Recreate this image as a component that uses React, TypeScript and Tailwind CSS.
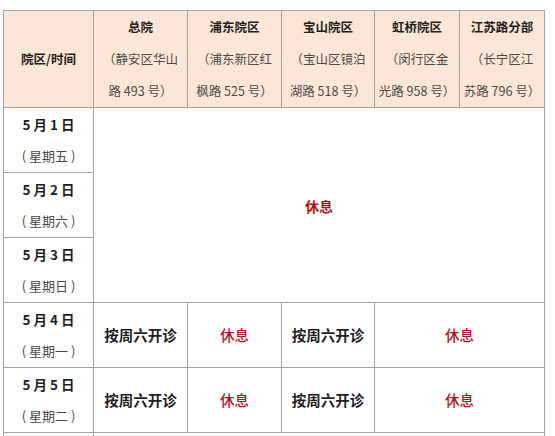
import React from "react";

const font = { fontFamily: '"Noto Sans CJK SC", "Noto Sans", sans-serif' };

const headers = [
  { name: "总院", l1: "（静安区华山", l2: "路 493 号）" },
  { name: "浦东院区", l1: "（浦东新区红", l2: "枫路 525 号）" },
  { name: "宝山院区", l1: "（宝山区镜泊", l2: "湖路 518 号）" },
  { name: "虹桥院区", l1: "（闵行区金", l2: "光路 958 号）" },
  { name: "江苏路分部", l1: "（长宁区江", l2: "苏路 796 号）" },
];

const td = "border border-[#a3a3a3] p-0 text-center align-middle";

function DateCell({ d, w }: { d: string; w: string }) {
  return (
    <td className={`${td} h-[65px]`}>
      <div className="leading-[32px] text-[13.5px] font-bold text-[#1f1f1f]">{d}</div>
      <div className="leading-[32px] text-[13px] text-[#4a4a4a]">( {w} )</div>
    </td>
  );
}

export default function App() {
  return (
    <div className="h-[436px] w-[555px] overflow-hidden bg-white" style={font}>
      <div className="pl-[3px] pt-[10px]">
        <table className="table-fixed border-collapse w-[541px]">
          <colgroup>
            <col className="w-[90px]" />
            <col className="w-[94px]" />
            <col className="w-[94px]" />
            <col className="w-[93px]" />
            <col className="w-[85px]" />
            <col className="w-[85px]" />
          </colgroup>
          <thead>
            <tr className="bg-[#fce6d8]">
              <th className={`${td} h-[97px] text-[12.5px] font-bold text-[#1f1f1f]`}>院区/时间</th>
              {headers.map((h) => (
                <th key={h.name} className={`${td} h-[97px] text-[12.5px] font-normal`}>
                  <div className="leading-[32px] font-bold text-[#1f1f1f] whitespace-nowrap">{h.name}</div>
                  <div className="leading-[32px] text-[#4a4a4a] whitespace-nowrap">{h.l1}</div>
                  <div className="leading-[32px] text-[#4a4a4a] whitespace-nowrap">{h.l2}</div>
                </th>
              ))}
            </tr>
          </thead>
          <tbody>
            <tr>
              <DateCell d="5 月 1 日" w="星期五" />
              <td className={td} colSpan={5} rowSpan={3}>
                <span className="text-[14px] font-bold text-[#b3121b]">休息</span>
              </td>
            </tr>
            <tr>
              <DateCell d="5 月 2 日" w="星期六" />
            </tr>
            <tr>
              <DateCell d="5 月 3 日" w="星期日" />
            </tr>
            {[
              ["5 月 4 日", "星期一"],
              ["5 月 5 日", "星期二"],
            ].map(([d, w]) => (
              <tr key={d}>
                <DateCell d={d} w={w} />
                <td className={`${td} text-[14.5px] font-bold text-[#1f1f1f]`}>按周六开诊</td>
                <td className={`${td} text-[14.5px] font-medium text-[#b3121b]`}>休息</td>
                <td className={`${td} text-[14.5px] font-bold text-[#1f1f1f]`}>按周六开诊</td>
                <td className={`${td} text-[14.5px] font-medium text-[#b3121b]`} colSpan={2}>休息</td>
              </tr>
            ))}
            <tr>
              <td className={`${td} h-[65px]`}></td>
              <td className={td} colSpan={5}></td>
            </tr>
          </tbody>
        </table>
      </div>
    </div>
  );
}
